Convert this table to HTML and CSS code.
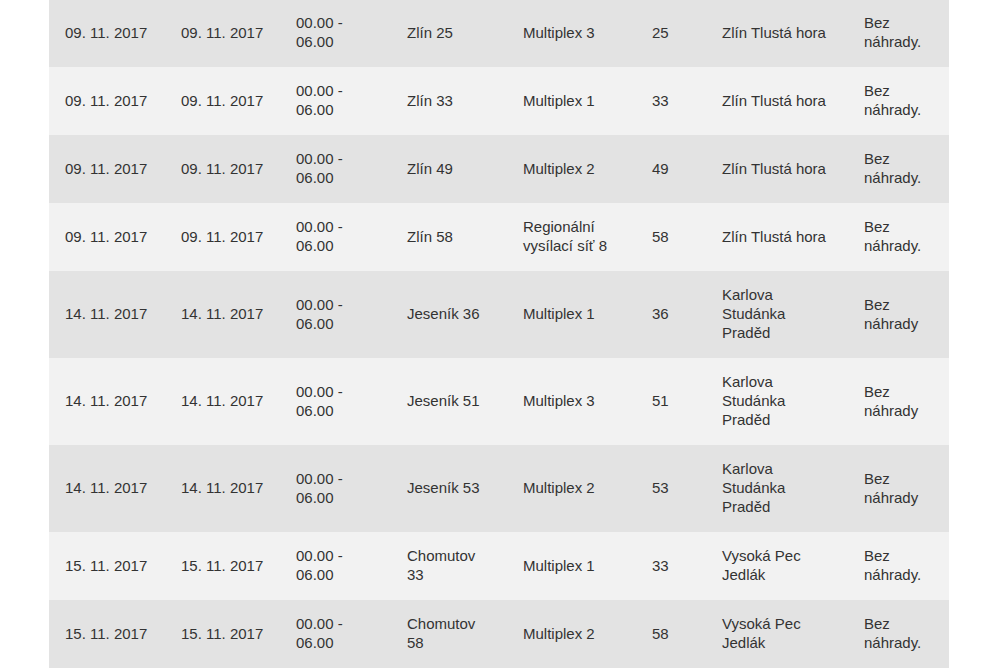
FILE: index.html
```html
<!DOCTYPE html>
<html lang="cs">
<head>
<meta charset="utf-8">
<title>Vypínání vysílačů</title>
<link rel="stylesheet" href="styles.css">
</head>
<body>
<table class="schedule">
  <colgroup>
    <col class="c-from"><col class="c-to"><col class="c-time"><col class="c-station"><col class="c-mux"><col class="c-ch"><col class="c-site"><col class="c-note">
  </colgroup>
  <tbody>
    <tr class="dark"><td>09. 11. 2017</td><td>09. 11. 2017</td><td>00.00 -<br>06.00</td><td>Zlín 25</td><td>Multiplex 3</td><td>25</td><td>Zlín Tlustá hora</td><td>Bez<br>náhrady.</td></tr>
    <tr class="light"><td>09. 11. 2017</td><td>09. 11. 2017</td><td>00.00 -<br>06.00</td><td>Zlín 33</td><td>Multiplex 1</td><td>33</td><td>Zlín Tlustá hora</td><td>Bez<br>náhrady.</td></tr>
    <tr class="dark"><td>09. 11. 2017</td><td>09. 11. 2017</td><td>00.00 -<br>06.00</td><td>Zlín 49</td><td>Multiplex 2</td><td>49</td><td>Zlín Tlustá hora</td><td>Bez<br>náhrady.</td></tr>
    <tr class="light"><td>09. 11. 2017</td><td>09. 11. 2017</td><td>00.00 -<br>06.00</td><td>Zlín 58</td><td>Regionální<br>vysílací síť 8</td><td>58</td><td>Zlín Tlustá hora</td><td>Bez<br>náhrady.</td></tr>
    <tr class="dark"><td>14. 11. 2017</td><td>14. 11. 2017</td><td>00.00 -<br>06.00</td><td>Jeseník 36</td><td>Multiplex 1</td><td>36</td><td>Karlova<br>Studánka<br>Praděd</td><td>Bez<br>náhrady</td></tr>
    <tr class="light"><td>14. 11. 2017</td><td>14. 11. 2017</td><td>00.00 -<br>06.00</td><td>Jeseník 51</td><td>Multiplex 3</td><td>51</td><td>Karlova<br>Studánka<br>Praděd</td><td>Bez<br>náhrady</td></tr>
    <tr class="dark"><td>14. 11. 2017</td><td>14. 11. 2017</td><td>00.00 -<br>06.00</td><td>Jeseník 53</td><td>Multiplex 2</td><td>53</td><td>Karlova<br>Studánka<br>Praděd</td><td>Bez<br>náhrady</td></tr>
    <tr class="light"><td>15. 11. 2017</td><td>15. 11. 2017</td><td>00.00 -<br>06.00</td><td>Chomutov<br>33</td><td>Multiplex 1</td><td>33</td><td>Vysoká Pec<br>Jedlák</td><td>Bez<br>náhrady.</td></tr>
    <tr class="dark"><td>15. 11. 2017</td><td>15. 11. 2017</td><td>00.00 -<br>06.00</td><td>Chomutov<br>58</td><td>Multiplex 2</td><td>58</td><td>Vysoká Pec<br>Jedlák</td><td>Bez<br>náhrady.</td></tr>
  </tbody>
</table>
</body>
</html>
```

FILE: styles.css
```css
html, body {
  margin: 0;
  padding: 0;
  background: #ffffff;
}

body {
  font-family: "Liberation Sans", Arial, sans-serif;
  font-size: 15px;
  line-height: 19px;
  color: #333333;
  overflow: hidden;
}

.schedule {
  width: 900px;
  margin: -1px 0 0 49px;
  border-collapse: collapse;
  table-layout: fixed;
}

.c-from { width: 116px; }
.c-to { width: 115px; }
.c-time { width: 111px; }
.c-station { width: 116px; }
.c-mux { width: 129px; }
.c-ch { width: 70px; }
.c-site { width: 142px; }
.c-note { width: 101px; }

.schedule td {
  padding: 14px 16px 16px;
  vertical-align: middle;
  text-align: left;
  white-space: nowrap;
}

.schedule tr.dark {
  background: #e3e3e3;
}

.schedule tr.light {
  background: #f2f2f2;
}
```
